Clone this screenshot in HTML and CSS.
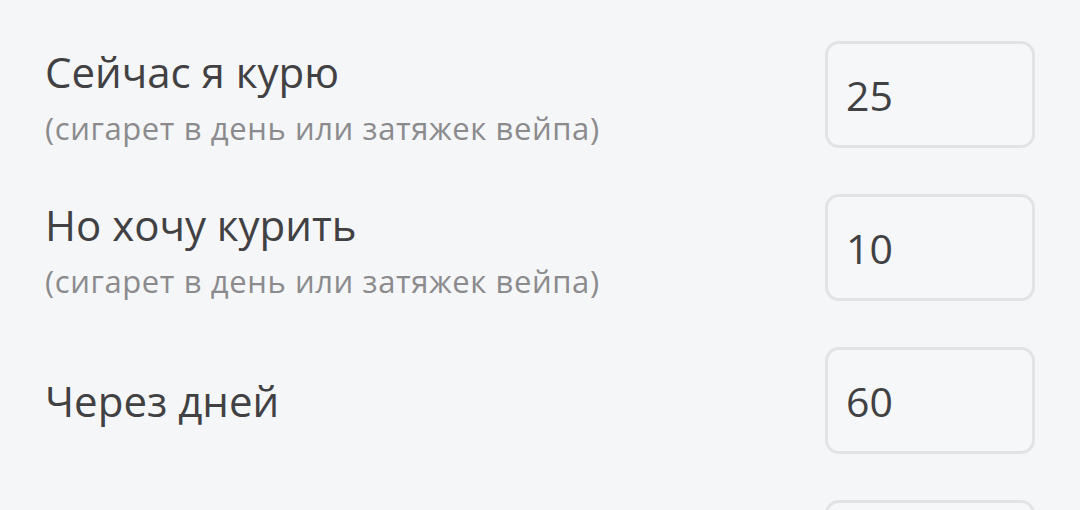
FILE: index.html
```html
<!DOCTYPE html>
<html lang="ru">
<head>
  <meta charset="UTF-8" />
  <meta name="viewport" content="width=device-width, initial-scale=1.0" />
  <title>Калькулятор</title>
  <link rel="stylesheet" href="styles.css">
</head>
<body>
  <div class="form">
    <div class="row">
      <div class="label stacked">
        <div class="title">Сейчас я курю</div>
        <div class="hint">(сигарет в день или затяжек вейпа)</div>
      </div>
      <div class="field">25</div>
    </div>
    <div class="row">
      <div class="label stacked">
        <div class="title">Но хочу курить</div>
        <div class="hint">(сигарет в день или затяжек вейпа)</div>
      </div>
      <div class="field">10</div>
    </div>
    <div class="row">
      <div class="label">
        <div class="title">Через дней</div>
      </div>
      <div class="field">60</div>
    </div>
    <div class="row">
      <div class="label stacked">
        <div class="title">Цена пачки, руб.</div>
        <div class="hint">(или картриджа)</div>
      </div>
      <div class="field">200</div>
    </div>
  </div>
</body>
</html>
```

FILE: styles.css
```css
:root {
  --bg: #f5f6f8;
  --text: #414143;
  --muted: #8b8b8d;
  --border: #e2e3e6;
}

body {
  margin: 0;
  background: var(--bg);
  font-family: 'Open Sans', 'Noto Sans', sans-serif;
  color: var(--text);
}

.form {
  display: flex;
  flex-direction: column;
  gap: 46px;
  padding: 41px 45px 0 45px;
}

.row {
  display: flex;
  justify-content: space-between;
  align-items: center;
  height: 107px;
}

/* two-line labels sit a bit lower than the box centre */
.label.stacked {
  margin-top: 6px;
}

.title {
  font-size: 42px;
  line-height: 52px;
}

.hint {
  margin-top: 8px;
  font-size: 31px;
  line-height: 44px;
  color: var(--muted);
  letter-spacing: 0.6px;
}

.field {
  box-sizing: border-box;
  width: 210px;
  height: 107px;
  border: 3px solid var(--border);
  border-radius: 14px;
  background: #f6f7f9;
  padding-left: 18px;
  display: flex;
  align-items: center;
  font-size: 41px;
}
```
